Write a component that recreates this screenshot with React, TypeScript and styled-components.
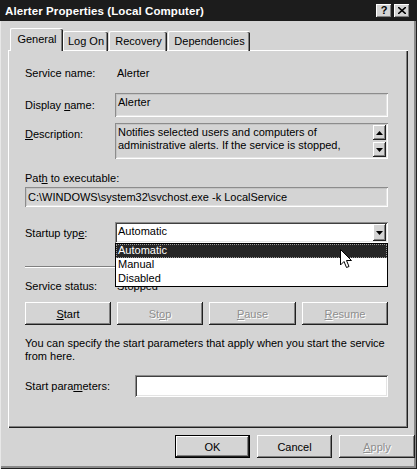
import React from "react";
import styled, { createGlobalStyle } from "styled-components";

const FACE = "#d4d4d4";

const GlobalStyle = createGlobalStyle`
  html, body { margin: 0; padding: 0; background: ${FACE}; }
  body { font-family: "Liberation Sans", Arial, sans-serif; font-size: 11px; color: #000; }
  * { box-sizing: border-box; }
`;

const Window = styled.div`
  position: relative;
  width: 417px;
  height: 469px;
  background: ${FACE};
  display: flex;
  flex-direction: column;
  box-shadow: inset 1px 0 0 #e8e8e8, inset -1px -1px 0 #202020, inset -3px -3px 0 #8a8a8a;
`;

const TitleBar = styled.div`
  height: 21px;
  background: #1c1c1c;
  display: flex;
  align-items: center;
  padding: 0 7px 0 5px;
  gap: 2px;
`;

const TitleText = styled.div`
  flex: 1;
  color: #fff;
  font-weight: bold;
  font-size: 11.5px;
  letter-spacing: 0.1px;
`;

const CapButton = styled.div`
  width: 16px;
  height: 14px;
  background: ${FACE};
  box-shadow: inset -1px -1px 0 #202020, inset 1px 1px 0 #fff, inset -2px -2px 0 #808080;
  display: flex;
  align-items: center;
  justify-content: center;
  font-weight: bold;
  font-size: 11px;
  line-height: 1;
  padding-bottom: 1px;
`;

const Body = styled.div`
  padding: 7px 0 0 8px;
  display: flex;
  flex-direction: column;
`;

const TabRow = styled.div`
  display: flex;
  align-items: flex-end;
  height: 23px;
  padding-left: 2px;
  position: relative;
  z-index: 2;
  margin-bottom: -1px;
`;

const Tab = styled.div<{ $w: number; $active?: boolean }>`
  width: ${(p) => p.$w}px;
  height: ${(p) => (p.$active ? 23 : 20)}px;
  background: ${FACE};
  display: flex;
  align-items: center;
  justify-content: center;
  padding-bottom: ${(p) => (p.$active ? 3 : 1)}px;
  border-top: 1px solid #fff;
  border-left: 1px solid #fff;
  border-radius: 2px 2px 0 0;
  box-shadow: inset -1px 0 0 #202020, inset -2px 0 0 #808080;
  margin-right: ${(p) => (p.$active ? 0 : 1)}px;
  ${(p) => (p.$active ? "" : "box-shadow: inset -1px 0 0 #202020, inset -2px 0 0 #808080, inset 0 -1px 0 #fff;")}
`;

const Panel = styled.div`
  position: relative;
  width: 400px;
  height: 378px;
  border-top: 1px solid #fff;
  border-left: 1px solid #fff;
  box-shadow: inset -1px -1px 0 #202020, inset -2px -2px 0 #808080;
  padding: 14px 20px 0 16px;
  display: flex;
  flex-direction: column;
`;

const Row = styled.div<{ $mt: number; $h: number; $align?: string }>`
  margin-top: ${(p) => p.$mt}px;
  height: ${(p) => p.$h}px;
  display: flex;
  align-items: ${(p) => p.$align || "center"};
  position: relative;
`;

const Label = styled.div<{ $w?: number; $pt?: number }>`
  width: ${(p) => p.$w ?? 90}px;
  flex: none;
  padding-top: ${(p) => p.$pt ?? 0}px;
`;

const Value = styled.div`
  padding-left: 2px;
`;

const Field = styled.div<{ $white?: boolean }>`
  flex: 1;
  height: 100%;
  position: relative;
  background: ${(p) => (p.$white ? "#fff" : FACE)};
  box-shadow: inset 1px 1px 0 #8c8c8c, inset -1px -1px 0 #fff, inset 2px 2px 0 ${(p) => (p.$white ? "#404040" : "#c4c4c4")}, inset -2px -2px 0 #e4e4e4;
  padding: 3px 3px 0 3px;
  line-height: 13px;
  white-space: nowrap;
  overflow: visible;
`;

const ScrollBar = styled.div`
  position: absolute;
  top: 2px;
  right: 2px;
  bottom: 2px;
  width: 13px;
  display: flex;
  flex-direction: column;
  justify-content: space-between;
`;

const ArrowBtn = styled.div<{ $h: number }>`
  width: 13px;
  height: ${(p) => p.$h}px;
  background: ${FACE};
  box-shadow: inset -1px -1px 0 #202020, inset 1px 1px 0 #fff, inset -2px -2px 0 #808080;
  display: flex;
  align-items: center;
  justify-content: center;
`;

const ComboBtn = styled(ArrowBtn)`
  position: absolute;
  right: 2px;
  top: 2px;
`;

const DropList = styled.div`
  position: absolute;
  left: 90px;
  right: 0;
  top: 21px;
  height: 44px;
  background: #fff;
  border: 1px solid #000;
  z-index: 5;
  display: flex;
  flex-direction: column;
`;

const Item = styled.div<{ $sel?: boolean }>`
  height: 14px;
  line-height: 13px;
  padding-left: 2px;
  background: ${(p) => (p.$sel ? "#262626" : "#fff")};
  color: ${(p) => (p.$sel ? "#fff" : "#000")};
  outline: ${(p) => (p.$sel ? "1px dotted #9a9a9a" : "none")};
  outline-offset: -1px;
`;

const Cursor = styled.svg`
  position: absolute;
  left: 224px;
  top: 5px;
  z-index: 6;
`;

const Separator = styled.div<{ $mt: number }>`
  margin-top: ${(p) => p.$mt}px;
  height: 2px;
  border-top: 1px solid #808080;
  border-bottom: 1px solid #fff;
`;

const ButtonRow = styled.div<{ $mt: number; $gap: number }>`
  margin-top: ${(p) => p.$mt}px;
  display: flex;
  gap: ${(p) => p.$gap}px;
`;

const Button = styled.div<{ $w: number; $disabled?: boolean; $default?: boolean }>`
  width: ${(p) => p.$w}px;
  height: 23px;
  background: ${FACE};
  display: flex;
  align-items: center;
  justify-content: center;
  color: ${(p) => (p.$disabled ? "#8e8e8e" : "#000")};
  text-shadow: ${(p) => (p.$disabled ? "1px 1px 0 #fff" : "none")};
  box-shadow: ${(p) =>
    p.$default
      ? "inset 0 0 0 1px #000, inset -2px -2px 0 #202020, inset 2px 2px 0 #fff, inset -3px -3px 0 #808080"
      : "inset -1px -1px 0 #202020, inset 1px 1px 0 #fff, inset -2px -2px 0 #808080"};
`;

const HelpText = styled.div`
  margin-top: 12px;
  line-height: 13px;
`;

const Footer = styled.div`
  display: flex;
  justify-content: flex-end;
  gap: 7px;
  padding-right: 2px;
  margin-top: 7px;
`;

const Up = () => (
  <svg width="7" height="4" viewBox="0 0 7 4"><path d="M3.5 0 L7 4 L0 4 Z" fill="#000" /></svg>
);
const Down = () => (
  <svg width="7" height="4" viewBox="0 0 7 4"><path d="M0 0 L7 0 L3.5 4 Z" fill="#000" /></svg>
);

export default function App() {
  return (
    <>
      <GlobalStyle />
      <Window>
        <TitleBar>
          <TitleText>Alerter Properties (Local Computer)</TitleText>
          <CapButton>?</CapButton>
          <CapButton>
            <svg width="8" height="7" viewBox="0 0 8 7">
              <path d="M0 0 L8 7 M8 0 L0 7" stroke="#000" strokeWidth="1.6" />
            </svg>
          </CapButton>
        </TitleBar>
        <Body>
          <TabRow>
            <Tab $w={53} $active>General</Tab>
            <Tab $w={45}>Log On</Tab>
            <Tab $w={58}>Recovery</Tab>
            <Tab $w={82}>Dependencies</Tab>
          </TabRow>
          <Panel>
            <Row $mt={0} $h={16}>
              <Label>Service name:</Label>
              <Value>Alerter</Value>
            </Row>
            <Row $mt={12} $h={24}>
              <Label>Display <u>n</u>ame:</Label>
              <Field>Alerter</Field>
            </Row>
            <Row $mt={6} $h={36} $align="flex-start">
              <Label $pt={5}><u>D</u>escription:</Label>
              <Field>
                Notifies selected users and computers of
                <br />
                administrative alerts. If the service is stopped,
                <ScrollBar>
                  <ArrowBtn $h={15}><Up /></ArrowBtn>
                  <ArrowBtn $h={15}><Down /></ArrowBtn>
                </ScrollBar>
              </Field>
            </Row>
            <Row $mt={12} $h={14}>
              <Label $w={200}>Pat<u>h</u> to executable:</Label>
            </Row>
            <Row $mt={2} $h={20}>
              <Field style={{ paddingTop: 4 }}>C:\WINDOWS\system32\svchost.exe -k LocalService</Field>
            </Row>
            <Row $mt={15} $h={21}>
              <Label>Startup typ<u>e</u>:</Label>
              <Field $white>
                Automatic
                <ComboBtn $h={17}><Down /></ComboBtn>
              </Field>
              <DropList>
                <Item $sel>Automatic</Item>
                <Item>Manual</Item>
                <Item>Disabled</Item>
                <Cursor width="13" height="21" viewBox="0 0 13 21">
                  <path d="M0.5 0.5 L0.5 16 L4 12.5 L6.5 18.5 L9 17.5 L6.5 11.5 L11.5 11.5 Z" fill="#fff" stroke="#000" strokeWidth="1" />
                </Cursor>
              </DropList>
            </Row>
            <Separator $mt={23} />
            <Row $mt={11} $h={14}>
              <Label>Service status:</Label>
              <Value>Stopped</Value>
            </Row>
            <ButtonRow $mt={9} $gap={6}>
              <Button $w={86}><u>S</u>tart</Button>
              <Button $w={86} $disabled>St<u>o</u>p</Button>
              <Button $w={87} $disabled><u>P</u>ause</Button>
              <Button $w={86} $disabled><u>R</u>esume</Button>
            </ButtonRow>
            <HelpText>
              You can specify the start parameters that apply when you start the service
              <br />
              from here.
            </HelpText>
            <Row $mt={12} $h={22}>
              <Label $w={110}>Start para<u>m</u>eters:</Label>
              <Field $white />
            </Row>
          </Panel>
          <Footer>
            <Button $w={75} $default>OK</Button>
            <Button $w={75}>Cancel</Button>
            <Button $w={76} $disabled><u>A</u>pply</Button>
          </Footer>
        </Body>
      </Window>
    </>
  );
}
